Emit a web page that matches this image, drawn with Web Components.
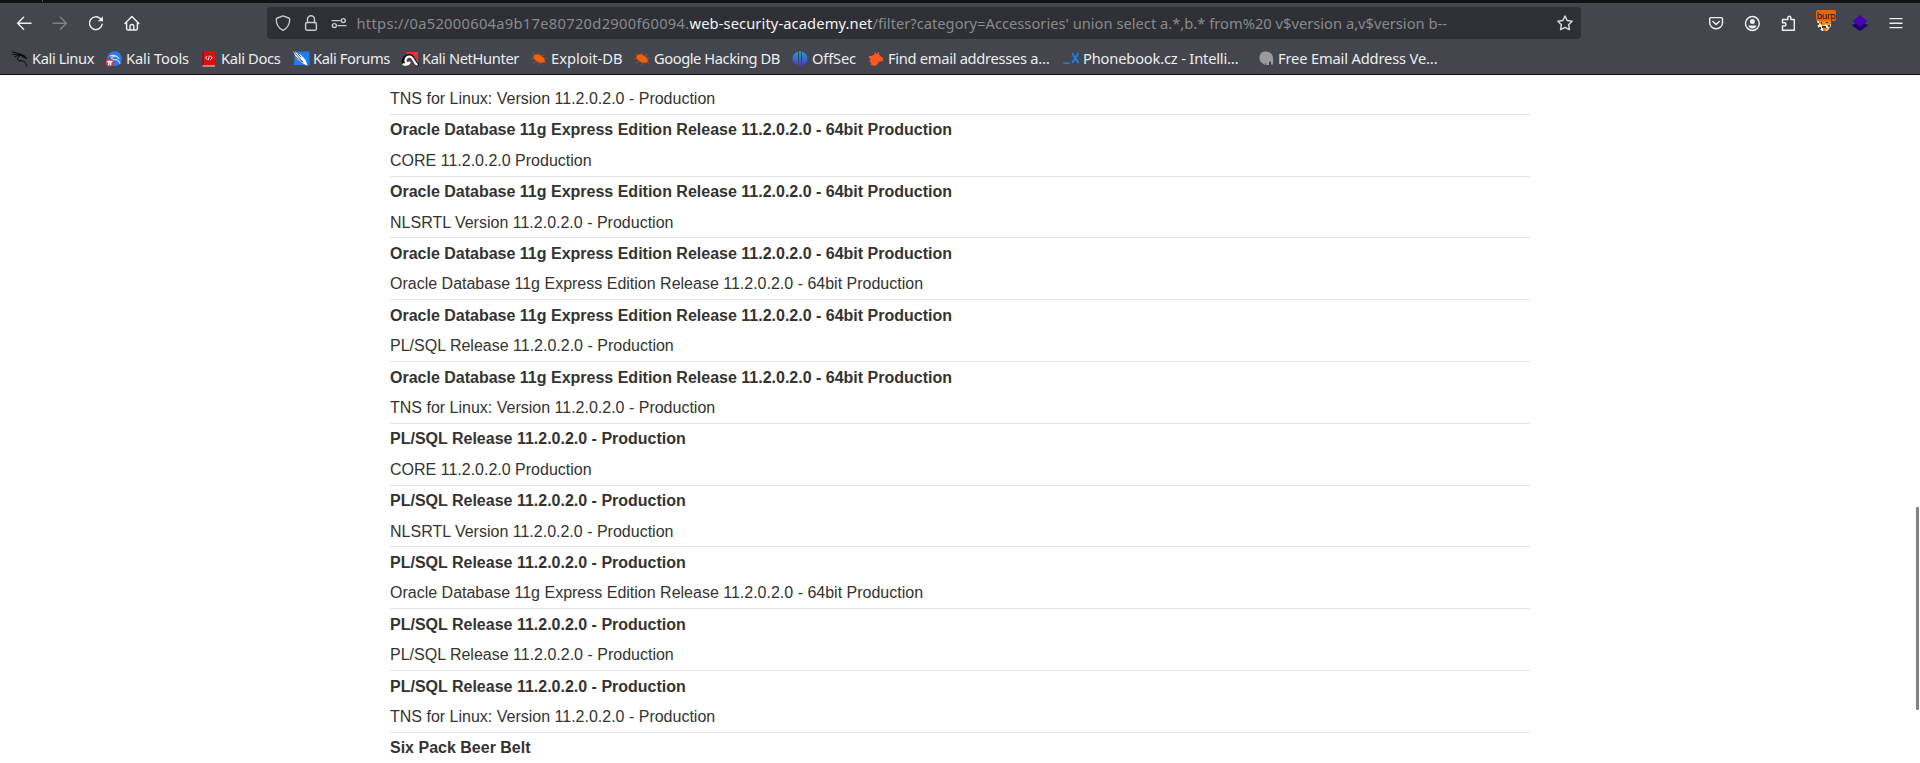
<!DOCTYPE html>
<html lang="en">
<head>
<meta charset="utf-8">
<title>Lab: web-security-academy.net</title>
<style>
html,body{margin:0;height:100%;overflow:hidden;background:#fff}
</style>
</head>
<body>
<browser-window></browser-window>
<script>
const define=(name,html,after)=>customElements.define(name,class extends HTMLElement{
  connectedCallback(){
    if(this.shadowRoot)return;
    this.attachShadow({mode:'open'}).innerHTML=typeof html==='function'?html(this):html;
    if(after)after(this);
  }
});

const ICONS={
back:'<path d="M15 8.3H1.7M7.6 2.3 1.6 8.3l6 6" />',
forward:'<path d="M1 8.3h13.3M8.4 2.3l6 6-6 6"/>',
reload:'<path d="M14.2 9.2A6.4 6.4 0 1 1 12.3 3.6l2 2"/><path d="M14.9 1.2v5h-5z" fill="currentColor" stroke="none"/>',
home:'<path d="M.9 8.4 7.9 1.6 14.9 8.4M2.6 7.2v6.2q0 1.6 1.6 1.6h7.6q1.6 0 1.6-1.6V7.2M6 15v-4q0-1.5 1.9-1.5T9.8 11v4"/>',
shield:'<path d="M8 .9 13.6 3q1.1.4 1.1 1.5c0 5-2.7 8.8-6.7 10.8C4 13.300 1.300 9.500 1.300 4.500Q1.300 3.400 2.400 3z" stroke-width="1.35"/>',
lock:'<rect x="2.6" y="7.4" width="10.8" height="7.9" rx="1.6"/><path d="M4.500 7.400V4.300a3.500 3.500 0 0 1 7 0v3.100"/>',
perms:'<path d="M1 5.600h8.200M7 10.600h8"/><circle cx="12.300" cy="5.600" r="2"/><circle cx="3.400" cy="10.600" r="2"/>',
star:'<path d="M8 1 10.200 5.500l4.900.7-3.500 3.500.8 5L8 12.400l-4.400 2.300.8-5L.9 6.200l4.900-.7z"/>',
pocket:'<path d="M3 2.600h10.200q1.300 0 1.300 1.300v3.800c0 3.600-2.900 6-6.400 6s-6.400-2.400-6.400-6V3.900Q1.700 2.600 3 2.600zM4.900 6.500l3.200 3.100 3.200-3.100"/>',
account:'<circle cx="8.400" cy="8.500" r="6.900"/><circle cx="8.400" cy="6.600" r="2.500" fill="currentColor" stroke="none"/><path d="M4.200 10.400h8.400q-1 3-4.200 3t-4.200-3z" fill="currentColor" stroke="none"/>',
puzzle:'<path d="M2.500 15.300h11.800V4.500h-3.500V3q0-1.800-1.500-1.800T7.800 3v1.500H2.500v3.300h1.700Q6 7.800 6 9.400T4.200 11H2.500z"/>',
layers:'<g stroke="none"><path d="M0 10.500 8 5.500l8 5L8 16z" fill="#1b0068"/><path d="M.500 6 8 0l7.500 6L8 12z" fill="#4a04ae"/></g>',
menu:'<path d="M2 3.600h12M2 8.300h12M2 12.600h12"/>',
burp:'<g stroke="none"><path d="M1 5h14v6l-4 5H6l-4-4z" fill="#efede5"/><path d="M3 5h12v4l-3 2-2-2-3 2-4-3z" fill="#ee870b"/><path d="M6 11h4v2H6zM5 7h1v2H5zM10 7h2v1h-2zM3 12h2v2H3z" fill="#4b3422"/><path d="M7 13h5l-2 3H7z" fill="#e98110"/><path d="M12 10h2v2h-2zM1 8h2v2H1z" fill="#5b4a36"/></g>',
kali:'<g stroke="#08090b" fill="none"><path d="M.2.800 5 2.200 9 3.200l3.500 2M.8 3.500q4-1 8 0M2.800 5.600Q6 3.800 9 4M9 3.800Q4.600 6 5.400 8.500q.700 1.700 4.600 1.400 3.800.1 4.600 5.200" stroke-width="1"/><path d="M8.500 3.500 12.500 4.800l2.500 2.700-2-.6-3-1.300" fill="#08090b" stroke-width=".5"/></g>',
tools:'<g stroke="none"><circle cx="8.500" cy="7.700" r="7.400" fill="#2b78ee"/><path d="M4 5q5-2 9 2.500M6 8q-1-2 2-2.500M7 8.600q5-.8 7 3.600" fill="none" stroke="#dce9ff" stroke-width="1.100"/><circle cx="3.600" cy="11.700" r="4" fill="#e32938"/><path d="M1.500 10.500h4.400M2.700 10.500v3.300M4.600 10.500v3.300" stroke="#fff"/></g>',
docs:'<g stroke="none"><path d="M1.500 0H14v15.500H1.500z" fill="#d90f14"/><path d="M1.500 0h1.300v14H1.500z" fill="#6d1630"/><path d="M1.500 14.500H14v1H1.500z" fill="#e5dedd"/><path d="m6 5.200-1.500 1.600L6 8.400M9.700 5.200l1.500 1.600-1.500 1.600M8.300 4.800l-.9 4" fill="none" stroke="#fff" stroke-width=".9"/></g>',
forums:'<g stroke="none"><path d="M2 .500h14.500V14H1z" fill="#247cf2"/><path d="M0 .300 8 4l4.600 5 2 6-5.200-3L4 8z" fill="#fff"/><path d="m1 1 9 10M3 6l6 5M5 3l3 3" stroke="#17202d" stroke-width=".7"/></g>',
nethunter:'<g stroke="none"><path d="M4 1h12v12l-3 2z" fill="#e5303a"/><path d="M1.400 11.500Q2.300 5 7.500 5c4.500 0 3.700 6 7.500 8.500" fill="none" stroke="#111" stroke-width="4"/><path d="M1.500 13.300q5 .8 6-1.700Q4 13 3.400 9.800 4 5.500 7.700 5.600c4 .2 3.400 5.700 7 7.800" fill="none" stroke="#fff" stroke-width="2.300"/></g>',
bug:'<g stroke="#d9500f" fill="#ee610f"><path d="M2.500 5Q6 1.500 10 4.700q4 2.300 4 6-4 2.500-8.300-.4Q2 8 2.500 5z" stroke-width=".5"/><path d="M3.500 4.500 2.500 2M7 3.500 8 1.500M10.500 5l3-1.500M12.500 7l3 .3M3 7.500.500 8M5.500 10l-3 2M9 11.500 7.500 14M13 10.500l1.800 2" fill="none" stroke-width=".6"/></g>',
offsec:'<defs><linearGradient id="g" x2="0" y2="1"><stop stop-color="#14a7c9"/><stop offset="1" stop-color="#5b2bd4"/></linearGradient></defs><g stroke="none" fill="url(#g)"><path d="M6 .500v13.800C2.600 13 .500 10.500.500 7.400S2.600 1.800 6 .500zM10 .500v13.800c3.400-1.300 5.500-3.800 5.500-6.900S13.400 1.800 10 .500zM7.100 0h1.800v16H7.100z"/></g>',
fox:'<path d="M6.800.500 8 2.900h1L10.500.500l.8 3.500 4.200 3.400-1 2.500-3.500.8-2.500 3.500-2 .9L2.500 13.600l.5-2.300-2.300-.8L2.500 9 .500 5.300l3.500-.6 2.300-1z" fill="#ff5821" stroke="none"/>',
phone:'<path d="M.2 12.200h6.800" stroke="#1f7df0" stroke-width="1.400" stroke-linecap="butt"/><path d="m9.500 2.700 5.600 8.800M15.100 2.700 9.500 11.500" stroke="#1f7df0" stroke-width="1.800"/>',
elephant:'<path d="M2 4Q3 .500 7 .500q6-.3 7.700 4.500.7 2 .3 8.500h-2v-3l-2 .300V14H8v-2.500L6.500 14 4 12Q0 9 2 4z" fill="#9a9a9a" stroke="none"/>'
};

define('ui-icon',el=>`<style>
:host{display:block;flex:none;width:16px;height:16px;color:#eeeef0}
:host([dim]){color:#818287}
svg{display:block;overflow:visible}
</style><svg width="16" height="16" viewBox="0 0 16 16" fill="none" stroke="currentColor" stroke-width="1.45" stroke-linejoin="round" stroke-linecap="round">${ICONS[el.getAttribute('name')]}</svg>`);

/* A single line of text whose tracking is adjusted to fill its column. */
define('fit-text',el=>`<style>
:host{display:block;flex:none;width:${el.getAttribute('w')}px;white-space:pre}
span{display:inline-block}
</style><span>${el.getAttribute('text')}</span>`,el=>{
  const s=el.shadowRoot.querySelector('span');
  const n=[...s.textContent].length;
  const d=(Number(el.getAttribute('w'))-s.getBoundingClientRect().width)/n;
  s.style.letterSpacing=d.toFixed(4)+'px';
});

define('burp-button',`<style>
:host{display:block;position:relative;width:16px;height:16px;flex:none}
b{position:absolute;left:0;top:-5px;width:20px;height:11px;box-sizing:border-box;text-align:center;border-radius:2px;background:#e96404;color:#2a1204;font:400 9px/11px "Noto Sans",sans-serif;letter-spacing:-.4px}
</style><ui-icon name="burp"></ui-icon><b>burp</b>`);

define('address-bar',`<style>
:host{display:flex;align-items:center;box-sizing:border-box;width:1314px;height:32px;padding:0 8px;border-radius:4px;background:#2f3035;color:#88898c;font:14.7px/32px "Noto Sans",sans-serif}
.i{display:flex;gap:12px;margin-right:9.5px}
.i ui-icon{color:#c9c9cc}
.h{color:#f4f4f5}
.s{margin-left:auto;color:#d8d8da}
</style><div class="i"><ui-icon name="shield"></ui-icon><ui-icon name="lock"></ui-icon><ui-icon name="perms"></ui-icon></div>
<fit-text w="333" text="https://0a52000604a9b17e80720d2900f60094."></fit-text><fit-text class="h" w="183" text="web-security-academy.net"></fit-text><fit-text w="574.5" text="/filter?category=Accessories' union select a.*,b.* from%20 v$version a,v$version b--"></fit-text>
<ui-icon class="s" name="star"></ui-icon>`);

define('nav-bar',`<style>
:host{display:flex;align-items:center;height:40px;padding:0 16px}
.g{display:flex;gap:20px}
address-bar{margin-left:127px}
.r{margin-left:auto}
</style><div class="g"><ui-icon name="back"></ui-icon><ui-icon name="forward" dim></ui-icon><ui-icon name="reload"></ui-icon><ui-icon name="home"></ui-icon></div>
<address-bar></address-bar>
<div class="g r"><ui-icon name="pocket"></ui-icon><ui-icon name="account"></ui-icon><ui-icon name="puzzle"></ui-icon><burp-button></burp-button><ui-icon name="layers"></ui-icon><ui-icon name="menu"></ui-icon></div>`);

define('book-mark',el=>`<style>
:host{display:flex;align-items:center;flex:none;gap:4px;width:${el.getAttribute('pitch')}px;font:14.7px/20px "Noto Sans",sans-serif;color:#ededef}
fit-text{margin-bottom:2px}
</style><ui-icon name="${el.getAttribute('icon')}"></ui-icon><fit-text w="${el.getAttribute('w')}" text="${el.getAttribute('label')}"></fit-text>`);

const MARKS=[['kali','Kali Linux',94,62],['tools','Kali Tools',95,63],['docs','Kali Docs',92,59.5],['forums','Kali Forums',109,77],['nethunter','Kali NetHunter',129,97],['bug','Exploit-DB',103,71.5],['bug','Google Hacking DB',158,126],['offsec','OffSec',76,44],['fox','Find email addresses a…',195,161.5],['phone','Phonebook.cz - Intelli…',195,155.5],['elephant','Free Email Address Ve…',180,159.5]];
define('bookmarks-bar',`<style>
:host{display:flex;align-items:center;height:30px;padding:1px 0 0 12px}
</style>${MARKS.map(m=>`<book-mark icon="${m[0]}" label="${m[1]}" pitch="${m[2]}" w="${m[3]}"></book-mark>`).join('')}`);

define('version-row',`<style>
:host{display:block;box-sizing:border-box;height:61.8px;border-top:1px solid #e3e3e3;font:16px/30.4px "Liberation Sans",Arial,sans-serif;color:#333332}
div{height:30.4px;padding-top:.6px;box-sizing:border-box}
.t{font-weight:700}
</style><div class="t"><slot name="title"></slot></div><div><slot></slot></div>`);

const ORA='Oracle Database 11g Express Edition Release 11.2.0.2.0 - 64bit Production',PL='PL/SQL Release 11.2.0.2.0 - Production',TNS='TNS for Linux: Version 11.2.0.2.0 - Production',CORE='CORE 11.2.0.2.0 Production',NLS='NLSRTL Version 11.2.0.2.0 - Production';
const ROWS=[...[CORE,NLS,ORA,PL,TNS].map(v=>[ORA,v]),...[CORE,NLS,ORA,PL,TNS].map(v=>[PL,v]),['Six Pack Beer Belt','']];
define('version-table',`<style>
:host{display:block;width:1140px;padding-top:8.400px}
p{margin:0;height:30.4px;padding-top:.6px;box-sizing:border-box;font:16px/30.4px "Liberation Sans",Arial,sans-serif;color:#333332}
</style><p>${TNS}</p>${ROWS.map(r=>`<version-row><span slot="title">${r[0]}</span>${r[1]}</version-row>`).join('')}`);

define('scroll-thumb',`<style>
:host{display:block;position:absolute;right:1px;top:432px;width:3px;height:203px;background:#7e8280;border-radius:1px}
</style>`);

define('browser-window',`<style>
:host{display:flex;flex-direction:column;width:1920px;height:763px;overflow:hidden;background:#fff}
.tabs{height:3px;background:#111214;flex:none;display:flex}
.tabs i{width:1px;height:2px;margin-left:42px;background:#55565b}
.chrome{flex:none;background:#44464d;border-bottom:1px solid #0c0d0f;height:71px}
main{flex:1;min-height:0;display:flex;justify-content:center;position:relative;overflow:hidden}
</style><div class="tabs"><i></i></div><div class="chrome"><nav-bar></nav-bar><bookmarks-bar></bookmarks-bar></div>
<main><version-table></version-table><scroll-thumb></scroll-thumb></main>`);
</script>
</body>
</html>
